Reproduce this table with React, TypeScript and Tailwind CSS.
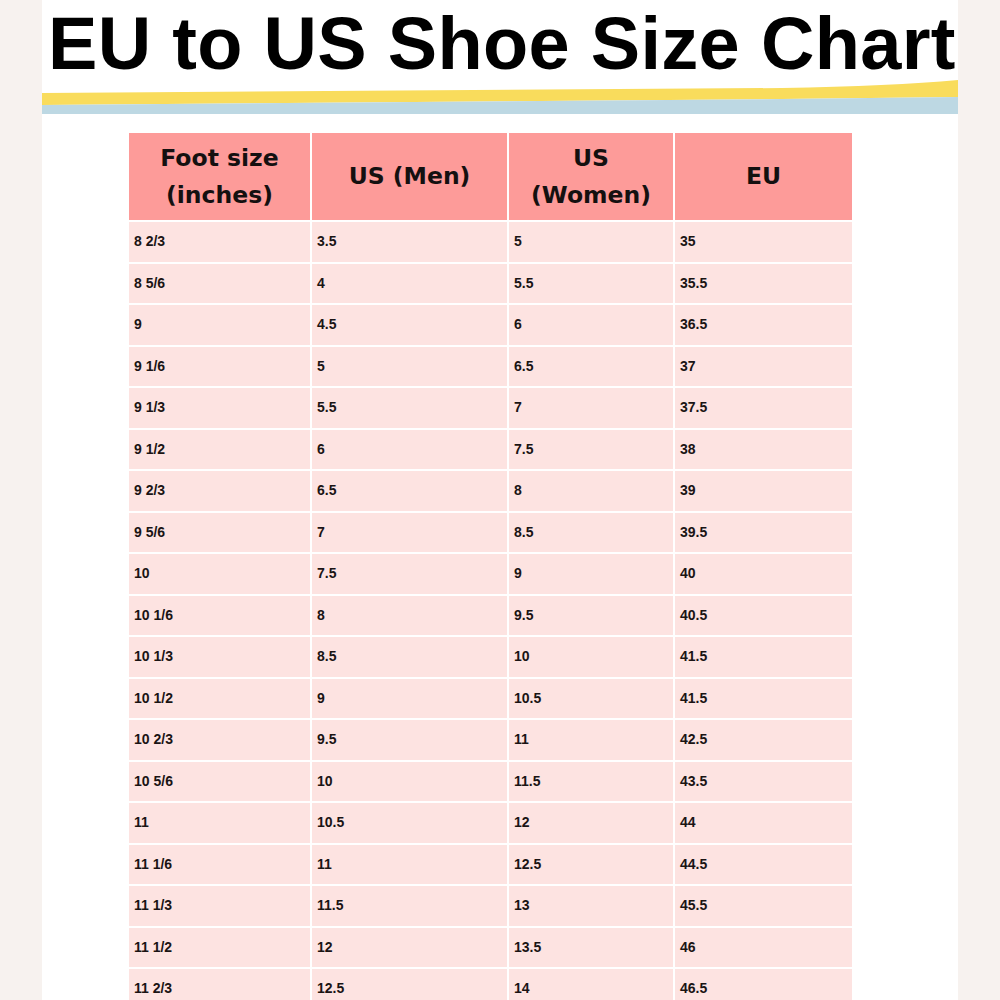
const rows: [string, string, string, string][] = [
    ['8 2/3', '3.5', '5', '35'],
    ['8 5/6', '4', '5.5', '35.5'],
    ['9', '4.5', '6', '36.5'],
    ['9 1/6', '5', '6.5', '37'],
    ['9 1/3', '5.5', '7', '37.5'],
    ['9 1/2', '6', '7.5', '38'],
    ['9 2/3', '6.5', '8', '39'],
    ['9 5/6', '7', '8.5', '39.5'],
    ['10', '7.5', '9', '40'],
    ['10 1/6', '8', '9.5', '40.5'],
    ['10 1/3', '8.5', '10', '41.5'],
    ['10 1/2', '9', '10.5', '41.5'],
    ['10 2/3', '9.5', '11', '42.5'],
    ['10 5/6', '10', '11.5', '43.5'],
    ['11', '10.5', '12', '44'],
    ['11 1/6', '11', '12.5', '44.5'],
    ['11 1/3', '11.5', '13', '45.5'],
    ['11 1/2', '12', '13.5', '46'],
    ['11 2/3', '12.5', '14', '46.5'],
];

const headers = [['Foot size', '(inches)'], ['US (Men)'], ['US', '(Women)'], ['EU']];

export default function App() {
    return (
        <div className="w-[1000px] h-[1000px] overflow-hidden bg-[#f7f2ef]">
            <div className="ml-[42px] w-[916px] h-full bg-white">
                <h1 className="h-[78px] pl-[6px] pt-[5px] text-[74px] leading-[78px] font-bold text-black whitespace-nowrap tracking-[0.3px] font-['Liberation_Sans',Arial,sans-serif]">
                    EU to US Shoe Size Chart
                </h1>
                <svg width="916" height="37" viewBox="0 0 916 37" className="block">
                    <path d="M0 15 L740 10 Q850 8 916 2 L916 19 L740 21 L0 27 Z" fill="#f9dc5c" />
                    <path d="M0 27 L740 21 L916 19 L916 36 L0 36 Z" fill="#bdd8e3" />
                </svg>
                <div className="ml-[87px] mt-[18px] grid grid-cols-[181px_195px_164px_177px] gap-[2px] bg-white w-fit">
                    {headers.map((h, i) => (
                        <div key={i} className="h-[87px] bg-[#fd9b99] flex flex-col items-center justify-center text-[23.5px] leading-[37px] font-bold text-[#141010] font-['DejaVu_Sans',sans-serif]">
                            {h.map((line) => (
                                <span key={line}>{line}</span>
                            ))}
                        </div>
                    ))}
                    {rows.map((r) =>
                        r.map((c, j) => (
                            <div key={r[0] + j} className="h-[39.5px] bg-[#fde3e1] flex items-center pl-[5px] text-[14px] font-bold text-[#1a1414] font-['Liberation_Sans',Arial,sans-serif]">
                                {c}
                            </div>
                        ))
                    )}
                </div>
            </div>
        </div>
    );
}
